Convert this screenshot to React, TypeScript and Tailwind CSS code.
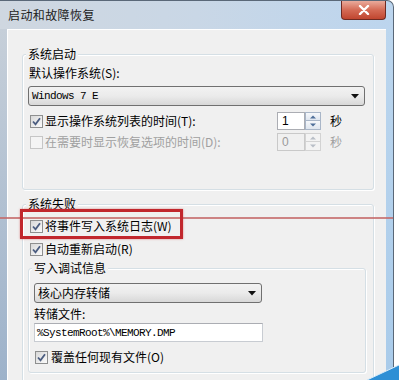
import React from "react";

function Check({ checked = false, disabled = false }: { checked?: boolean; disabled?: boolean }) {
  return (
    <div
      className={
        "flex-none w-[13px] h-[13px] border flex items-center justify-center " +
        (disabled
          ? "border-[#c6c6c6] bg-[#f4f4f4]"
          : "border-[#8e8f8f] bg-gradient-to-br from-[#d8d8d8] to-[#fbfbfb]")
      }
    >
      {checked && (
        <svg width="11" height="11" viewBox="0 0 11 11">
          <path d="M2 5.5 L4.5 8.3 L9 2.2" fill="none" stroke="#4b5d80" strokeWidth="1.8" />
        </svg>
      )}
    </div>
  );
}

function Combo({ w, children, mono = false }: { w: string; children: React.ReactNode; mono?: boolean }) {
  return (
    <div
      className={
        w +
        " h-[20px] flex-none flex items-center justify-between border border-[#707070] rounded-[3px] bg-gradient-to-b from-[#f2f2f2] via-[#ebebeb] to-[#d8d8d8] pl-[3px] pr-[5px]"
      }
    >
      <span
        className={
          mono
            ? "font-['Liberation_Mono',monospace] text-[11px] tracking-[-0.6px] text-black leading-[14px]"
            : "text-[12px] leading-[14px] text-black"
        }
      >
        {children}
      </span>
      <svg width="8" height="5" viewBox="0 0 8 5">
        <path d="M0 0 L8 0 L4 4.5 Z" fill="#111" />
      </svg>
    </div>
  );
}

function Spinner({ value, disabled = false }: { value: string; disabled?: boolean }) {
  const arrow = disabled ? "#b8bec6" : "#4f6f99";
  return (
    <div className="flex flex-none h-[18px]">
      <div
        className={
          "w-[28px] h-[18px] border flex items-center pl-[4px] text-[12px] leading-[14px] font-['Liberation_Sans',sans-serif] " +
          (disabled
            ? "border-[#c9c9c9] bg-[#f0f0f0] text-[#9a9a9a]"
            : "border-[#abadb3] bg-white text-black")
        }
      >
        {value}
      </div>
      <div className="flex flex-col w-[16px] h-[18px]">
        <div
          className={
            "h-[9px] border flex items-center justify-center " +
            (disabled ? "border-[#d3d3d3] bg-[#f3f3f3]" : "border-[#a9b6c8] bg-gradient-to-b from-[#f6f8fb] to-[#dfe6ef]")
          }
        >
          <svg width="6" height="4" viewBox="0 0 6 4">
            <path d="M0 3.5 L3 0.5 L6 3.5 Z" fill={arrow} />
          </svg>
        </div>
        <div
          className={
            "h-[9px] border border-t-0 flex items-center justify-center " +
            (disabled ? "border-[#d3d3d3] bg-[#f3f3f3]" : "border-[#a9b6c8] bg-gradient-to-b from-[#f6f8fb] to-[#dfe6ef]")
          }
        >
          <svg width="6" height="4" viewBox="0 0 6 4">
            <path d="M0 0.5 L3 3.5 L6 0.5 Z" fill={arrow} />
          </svg>
        </div>
      </div>
    </div>
  );
}

export default function App() {
  return (
    <div className="relative w-[399px] h-[380px] overflow-hidden bg-white font-['Noto_Sans_CJK_SC',sans-serif] text-[12px] text-black">
      {/* window */}
      <div className="w-[394px] h-[380px] flex flex-col rounded-tr-[7px] border-r border-t border-[#5a6878] bg-gradient-to-r from-[#cfd7e0] via-[#c9d7e6] to-[#bcd5ee]">
        {/* title bar */}
        <div className="h-[28px] flex-none flex items-start justify-between">
          <div className="pl-[8px] pt-[6px] text-[12px] leading-[16px] tracking-[0.4px] text-[#1b1b1b]">
            启动和故障恢复
          </div>
          <div className="mr-[7px] w-[45px] h-[19px] rounded-b-[4px] border border-t-0 border-[#6e2a22] bg-gradient-to-b from-[#e9ab9c] via-[#d46a55] to-[#c0452f] flex items-center justify-center">
            <svg width="12" height="10" viewBox="0 0 12 10">
              <path d="M2 1 L10 9 M10 1 L2 9" stroke="#fff" strokeWidth="2.4" strokeLinecap="round" />
            </svg>
          </div>
        </div>
        {/* body */}
        <div className="flex flex-1 min-h-0">
          <div className="w-[7px] flex-none bg-gradient-to-b from-[#c6cfd9] to-[#9db2ca]" />
          <div className="w-[379px] flex-none border-l border-t border-white bg-[#f0f0f0] flex flex-col overflow-hidden">
            {/* group 1 */}
            <div className="ml-[14px] mt-[24px] relative w-[352px] h-[136px] flex-none border border-[#d5dfe5] rounded-[3px] shadow-[inset_1px_1px_0_#ffffff,1px_1px_0_#ffffff]">
              <span className="absolute left-[3px] top-[-8px] px-[2px] bg-[#f0f0f0] leading-[14px]">系统启动</span>
              <div className="flex flex-col pl-[5px]">
                <div className="mt-[11px] ml-[1px] leading-[14px]">默认操作系统(S):</div>
                <div className="mt-[6px]">
                  <Combo w="w-[337px]" mono>
                    Windows 7 E
                  </Combo>
                </div>
                <div className="mt-[6px] h-[18px] flex items-center">
                  <div className="ml-[2px]">
                    <Check checked />
                  </div>
                  <span className="ml-[2px] w-[232px] flex-none leading-[14px]">显示操作系统列表的时间(T):</span>
                  <Spinner value="1" />
                  <span className="ml-[9px] leading-[14px]">秒</span>
                </div>
                <div className="mt-[3px] h-[18px] flex items-center text-[#a0a0a0]">
                  <div className="ml-[2px]">
                    <Check disabled />
                  </div>
                  <span className="ml-[2px] w-[232px] flex-none leading-[14px]">在需要时显示恢复选项的时间(D):</span>
                  <Spinner value="0" disabled />
                  <span className="ml-[9px] leading-[14px]">秒</span>
                </div>
              </div>
            </div>
            {/* group 2 */}
            <div className="ml-[14px] mt-[14px] relative w-[352px] h-[200px] flex-none border border-[#d5dfe5] rounded-[3px] shadow-[inset_1px_1px_0_#ffffff,1px_1px_0_#ffffff]">
              <span className="absolute left-[3px] top-[-8px] px-[2px] bg-[#f0f0f0] leading-[14px]">系统失败</span>
              <div className="flex flex-col pl-[5px]">
                <div className="mt-[12px] h-[18px] flex items-center">
                  <div className="ml-[2px]">
                    <Check checked />
                  </div>
                  <span className="ml-[2px] leading-[14px]">将事件写入系统日志(W)</span>
                </div>
                <div className="mt-[5px] h-[18px] flex items-center">
                  <div className="ml-[2px]">
                    <Check checked />
                  </div>
                  <span className="ml-[2px] leading-[14px]">自动重新启动(R)</span>
                </div>
                {/* sub group */}
                <div className="mt-[10px] relative w-[338px] h-[105px] flex-none border border-[#d5dfe5] rounded-[3px] shadow-[inset_1px_1px_0_#ffffff,1px_1px_0_#ffffff]">
                  <span className="absolute left-[3px] top-[-8px] px-[2px] bg-[#f0f0f0] leading-[14px]">写入调试信息</span>
                  <div className="flex flex-col pl-[5px]">
                    <div className="mt-[14px]">
                      <Combo w="w-[228px]">核心内存转储</Combo>
                    </div>
                    <div className="mt-[4px] leading-[14px]">转储文件:</div>
                    <div className="mt-[2px] w-[229px] h-[19px] flex-none border border-[#c8ccd2] border-t-[#abadb3] bg-white flex items-center pl-[2px] font-['Liberation_Mono',monospace] text-[11px] tracking-[-0.6px] leading-[14px]">
                      %SystemRoot%\MEMORY.DMP
                    </div>
                    <div className="mt-[6px] h-[18px] flex items-center">
                      <div className="ml-[1px]">
                        <Check checked />
                      </div>
                      <span className="ml-[3px] leading-[14px]">覆盖任何现有文件(O)</span>
                    </div>
                  </div>
                </div>
              </div>
            </div>
          </div>
          <div className="w-[7px] flex-none bg-gradient-to-b from-[#bcd6ee] to-[#a9cbea]" />
        </div>
      </div>

      {/* annotations */}
      <div className="absolute left-0 top-[217px] w-[393px] h-[2px] bg-[#c46868] opacity-80" />
      <div className="absolute left-[20px] top-[209px] w-[163px] h-[30px] border-[3px] border-[#c1272d] shadow-[0_0_2px_rgba(200,40,40,0.5)]" />

      {/* desktop corner */}
      <svg className="absolute right-0 bottom-0" width="32" height="16" viewBox="0 0 32 16">
        <path d="M0 16 L32 1 L32 16 Z" fill="#2e8fd5" />
        <path d="M0 16 L32 1" stroke="#d8ecfa" strokeWidth="1" />
      </svg>
    </div>
  );
}
